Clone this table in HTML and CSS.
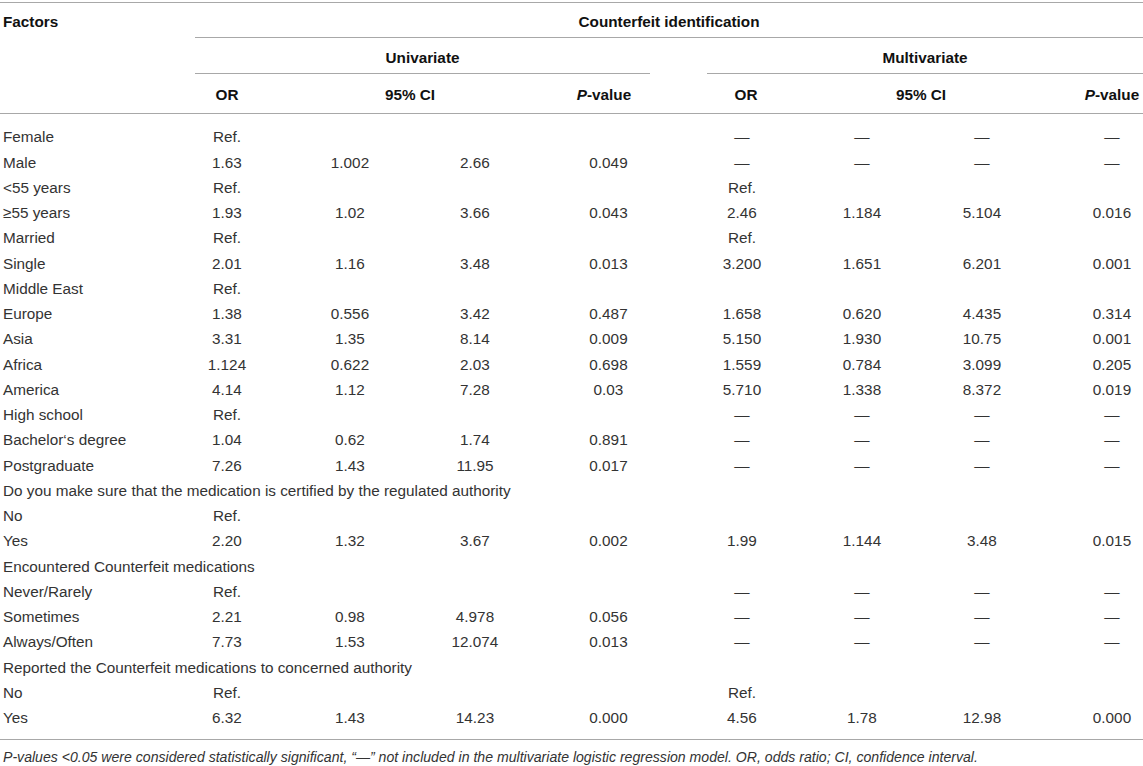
FILE: index.html
```html
<!DOCTYPE html>
<html lang="en">
<head>
<meta charset="utf-8">
<title>Counterfeit identification</title>
<link rel="stylesheet" href="styles.css">
</head>
<body>
<table class="tbl">
  <colgroup>
    <col class="w0"><col class="w1"><col class="w2"><col class="w3"><col class="w4"><col class="w5"><col class="w6"><col class="w7"><col class="w8">
  </colgroup>
  <thead>
    <tr class="h1">
      <th class="factors" rowspan="3">Factors</th>
      <th class="ci" colspan="8">Counterfeit identification</th>
    </tr>
    <tr class="h2">
      <th colspan="4"><div class="grp grp-uni">Univariate</div></th>
      <th colspan="4"><div class="grp grp-multi">Multivariate</div></th>
    </tr>
    <tr class="h3">
      <th class="c1">OR</th>
      <th class="hci-u" colspan="2">95% CI</th>
      <th class="hp-u"><i>P</i>-value</th>
      <th class="hor-m">OR</th>
      <th class="hci-m" colspan="2">95% CI</th>
      <th class="c8"><i>P</i>-value</th>
    </tr>
  </thead>
  <tbody>
    <tr class="first"><td class="lbl">Female</td><td class="c1">Ref.</td><td></td><td class="c3"></td><td></td><td class="c5">—</td><td>—</td><td class="c7">—</td><td class="c8">—</td></tr>
    <tr><td class="lbl">Male</td><td class="c1">1.63</td><td>1.002</td><td class="c3">2.66</td><td>0.049</td><td class="c5">—</td><td>—</td><td class="c7">—</td><td class="c8">—</td></tr>
    <tr><td class="lbl">&lt;55 years</td><td class="c1">Ref.</td><td></td><td class="c3"></td><td></td><td class="c5">Ref.</td><td></td><td class="c7"></td><td class="c8"></td></tr>
    <tr><td class="lbl">≥55 years</td><td class="c1">1.93</td><td>1.02</td><td class="c3">3.66</td><td>0.043</td><td class="c5">2.46</td><td>1.184</td><td class="c7">5.104</td><td class="c8">0.016</td></tr>
    <tr><td class="lbl">Married</td><td class="c1">Ref.</td><td></td><td class="c3"></td><td></td><td class="c5">Ref.</td><td></td><td class="c7"></td><td class="c8"></td></tr>
    <tr><td class="lbl">Single</td><td class="c1">2.01</td><td>1.16</td><td class="c3">3.48</td><td>0.013</td><td class="c5">3.200</td><td>1.651</td><td class="c7">6.201</td><td class="c8">0.001</td></tr>
    <tr><td class="lbl">Middle East</td><td class="c1">Ref.</td><td></td><td class="c3"></td><td></td><td class="c5"></td><td></td><td class="c7"></td><td class="c8"></td></tr>
    <tr><td class="lbl">Europe</td><td class="c1">1.38</td><td>0.556</td><td class="c3">3.42</td><td>0.487</td><td class="c5">1.658</td><td>0.620</td><td class="c7">4.435</td><td class="c8">0.314</td></tr>
    <tr><td class="lbl">Asia</td><td class="c1">3.31</td><td>1.35</td><td class="c3">8.14</td><td>0.009</td><td class="c5">5.150</td><td>1.930</td><td class="c7">10.75</td><td class="c8">0.001</td></tr>
    <tr><td class="lbl">Africa</td><td class="c1">1.124</td><td>0.622</td><td class="c3">2.03</td><td>0.698</td><td class="c5">1.559</td><td>0.784</td><td class="c7">3.099</td><td class="c8">0.205</td></tr>
    <tr><td class="lbl">America</td><td class="c1">4.14</td><td>1.12</td><td class="c3">7.28</td><td>0.03</td><td class="c5">5.710</td><td>1.338</td><td class="c7">8.372</td><td class="c8">0.019</td></tr>
    <tr><td class="lbl">High school</td><td class="c1">Ref.</td><td></td><td class="c3"></td><td></td><td class="c5">—</td><td>—</td><td class="c7">—</td><td class="c8">—</td></tr>
    <tr><td class="lbl">Bachelor‘s degree</td><td class="c1">1.04</td><td>0.62</td><td class="c3">1.74</td><td>0.891</td><td class="c5">—</td><td>—</td><td class="c7">—</td><td class="c8">—</td></tr>
    <tr><td class="lbl">Postgraduate</td><td class="c1">7.26</td><td>1.43</td><td class="c3">11.95</td><td>0.017</td><td class="c5">—</td><td>—</td><td class="c7">—</td><td class="c8">—</td></tr>
    <tr><td class="lbl" colspan="9">Do you make sure that the medication is certified by the regulated authority</td></tr>
    <tr><td class="lbl">No</td><td class="c1">Ref.</td><td></td><td class="c3"></td><td></td><td class="c5"></td><td></td><td class="c7"></td><td class="c8"></td></tr>
    <tr><td class="lbl">Yes</td><td class="c1">2.20</td><td>1.32</td><td class="c3">3.67</td><td>0.002</td><td class="c5">1.99</td><td>1.144</td><td class="c7">3.48</td><td class="c8">0.015</td></tr>
    <tr><td class="lbl" colspan="9">Encountered Counterfeit medications</td></tr>
    <tr><td class="lbl">Never/Rarely</td><td class="c1">Ref.</td><td></td><td class="c3"></td><td></td><td class="c5">—</td><td>—</td><td class="c7">—</td><td class="c8">—</td></tr>
    <tr><td class="lbl">Sometimes</td><td class="c1">2.21</td><td>0.98</td><td class="c3">4.978</td><td>0.056</td><td class="c5">—</td><td>—</td><td class="c7">—</td><td class="c8">—</td></tr>
    <tr><td class="lbl">Always/Often</td><td class="c1">7.73</td><td>1.53</td><td class="c3">12.074</td><td>0.013</td><td class="c5">—</td><td>—</td><td class="c7">—</td><td class="c8">—</td></tr>
    <tr><td class="lbl" colspan="9">Reported the Counterfeit medications to concerned authority</td></tr>
    <tr><td class="lbl">No</td><td class="c1">Ref.</td><td></td><td class="c3"></td><td></td><td class="c5">Ref.</td><td></td><td class="c7"></td><td class="c8"></td></tr>
    <tr class="last"><td class="lbl">Yes</td><td class="c1">6.32</td><td>1.43</td><td class="c3">14.23</td><td>0.000</td><td class="c5">4.56</td><td>1.78</td><td class="c7">12.98</td><td class="c8">0.000</td></tr>
  </tbody>
  <tfoot>
    <tr>
      <td class="note" colspan="9"><i>P</i>-values &lt;0.05 were considered statistically significant, “—” not included in the multivariate logistic regression model. OR, odds ratio; CI, confidence interval.</td>
    </tr>
  </tfoot>
</table>
</body>
</html>
```

FILE: styles.css
```css
html, body {
  margin: 0;
  padding: 0;
  background: #ffffff;
}

body {
  font-family: "Liberation Sans", Arial, Helvetica, sans-serif;
  color: #333333;
}

.tbl {
  width: 1143px;
  table-layout: fixed;
  border-collapse: separate;
  border-spacing: 0;
  margin-top: 2px;
  border-top: 1px solid #a8a8a8;
  font-size: 15.3px;
}

.w0 { width: 195px; }
.w1 { width: 93px; }
.w2 { width: 124px; }
.w3 { width: 130px; }
.w4 { width: 133px; }
.w5 { width: 127px; }
.w6 { width: 120px; }
.w7 { width: 125px; }
.w8 { width: 96px; }

th {
  font-weight: bold;
  color: #111111;
  padding: 0;
  text-align: center;
  line-height: 22px;
  white-space: nowrap;
}

th i, td i {
  font-style: italic;
}

.h1 th {
  padding-top: 8px;
  padding-bottom: 4px;
}

.factors {
  text-align: left;
  vertical-align: top;
  padding-left: 3px;
  border-bottom: 1px solid #a8a8a8;
}

.ci {
  border-bottom: 1px solid #a8a8a8;
}

.h2 th {
  padding: 0;
}

.grp {
  padding-top: 9px;
  padding-bottom: 4px;
  border-bottom: 1px solid #a8a8a8;
}

.grp-uni {
  margin-right: 25px;
}

.grp-multi {
  margin-left: 32px;
}

.h3 th {
  padding-top: 10px;
  padding-bottom: 7px;
  border-bottom: 1px solid #a8a8a8;
}

.hci-u { padding-right: 10px; }
.hp-u { padding-right: 9px; }
.hor-m { padding-left: 15px; }
.hci-m { padding-right: 7px; }

td {
  padding: 0;
  line-height: 25.25px;
  text-align: center;
  white-space: nowrap;
}

td.lbl {
  text-align: left;
  padding-left: 3px;
}

.h3 th.c1, td.c1 { padding-right: 29px; }
td.c3 { padding-right: 4px; }
td.c5 { padding-left: 7px; }
td.c7 { padding-right: 5px; }
.h3 th.c8, td.c8 { padding-left: 34px; }

tr.first td {
  padding-top: 10.4px;
}

tr.last td {
  padding-bottom: 8.4px;
}

td.note {
  border-top: 1px solid #a8a8a8;
  padding-top: 8px;
  padding-left: 3px;
  text-align: left;
  font-size: 14.1px;
  line-height: 18px;
  font-style: italic;
  color: #333333;
}
```
